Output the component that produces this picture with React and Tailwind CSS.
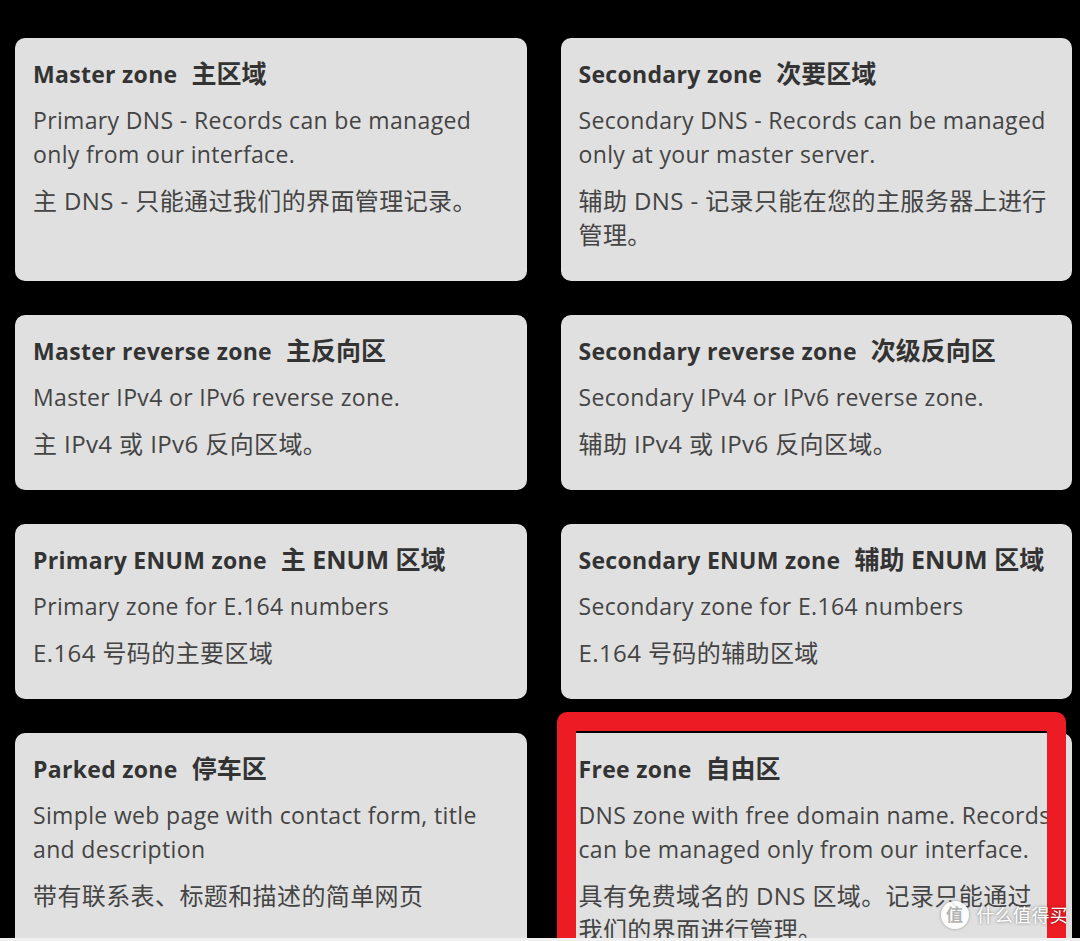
import React from "react";

const zones = [
  {
    title: "Master zone",
    zh: "主区域",
    desc: "Primary DNS - Records can be managed only from our interface.",
    descZh: "主 DNS - 只能通过我们的界面管理记录。",
  },
  {
    title: "Secondary zone",
    zh: "次要区域",
    desc: "Secondary DNS - Records can be managed only at your master server.",
    descZh: "辅助 DNS - 记录只能在您的主服务器上进行管理。",
  },
  {
    title: "Master reverse zone",
    zh: "主反向区",
    desc: "Master IPv4 or IPv6 reverse zone.",
    descZh: "主 IPv4 或 IPv6 反向区域。",
  },
  {
    title: "Secondary reverse zone",
    zh: "次级反向区",
    desc: "Secondary IPv4 or IPv6 reverse zone.",
    descZh: "辅助 IPv4 或 IPv6 反向区域。",
  },
  {
    title: "Primary ENUM zone",
    zh: "主 ENUM 区域",
    desc: "Primary zone for E.164 numbers",
    descZh: "E.164 号码的主要区域",
  },
  {
    title: "Secondary ENUM zone",
    zh: "辅助 ENUM 区域",
    desc: "Secondary zone for E.164 numbers",
    descZh: "E.164 号码的辅助区域",
  },
  {
    title: "Parked zone",
    zh: "停车区",
    desc: "Simple web page with contact form, title and description",
    descZh: "带有联系表、标题和描述的简单网页",
  },
  {
    title: "Free zone",
    zh: "自由区",
    desc: "DNS zone with free domain name. Records can be managed only from our interface.",
    descZh: "具有免费域名的 DNS 区域。记录只能通过我们的界面进行管理。",
    marked: true,
  },
];

function ZoneCard(props) {
  return (
    <article className="relative bg-[#e0e0e0] rounded-[10px] px-[18px] pt-[20px] pb-[29px]">
      <h3 className="h-[30px] text-[23px] leading-[30px] font-bold text-[#333] tracking-[0.3px] whitespace-nowrap">
        {props.title}
        <span className="ml-[14px] text-[25px] tracking-normal">{props.zh}</span>
      </h3>
      <p className="mt-[15px] text-[23px] leading-[34px] tracking-[0.35px] text-[#444]">
        {props.desc}
      </p>
      <p className="mt-[13px] text-[24px] leading-[34px] tracking-[0.4px] text-[#444] pr-[5px]">
        {props.descZh}
      </p>

      {props.marked && (
        <div className="absolute left-[-4px] top-[-21px] w-[509px] h-[260px] border-[19px] border-[#ed1c24] rounded-[10px]"></div>
      )}
    </article>
  );
}

export default function App() {
  return (
    <div
      className="relative h-[941px] bg-black flex flex-col overflow-hidden"
      style={{ fontFamily: '"Open Sans", "Noto Sans CJK SC", sans-serif' }}
    >
      <div className="flex-1 overflow-hidden pl-[15px] pr-[8px] pt-[38px]">
        <div className="grid grid-cols-2 gap-x-[34px] gap-y-[34px]">
          {zones.map((z) => (
            <ZoneCard key={z.title} {...z} />
          ))}
        </div>
      </div>
      <div className="h-[3px] bg-[#f0f0f0]"></div>

      {/* watermark */}
      <div className="absolute right-[12px] bottom-[12px] flex items-center gap-[8px]">
        <span className="w-[28px] h-[28px] rounded-full bg-white/90 flex items-center justify-center text-[17px] font-bold text-[#b5b5b5] shadow-[0_0_3px_rgba(0,0,0,0.35)]">
          值
        </span>
        <span className="text-[18px] text-white tracking-[0.3px] [text-shadow:0_0_3px_rgba(0,0,0,0.5)]">
          什么值得买
        </span>
      </div>
    </div>
  );
}
